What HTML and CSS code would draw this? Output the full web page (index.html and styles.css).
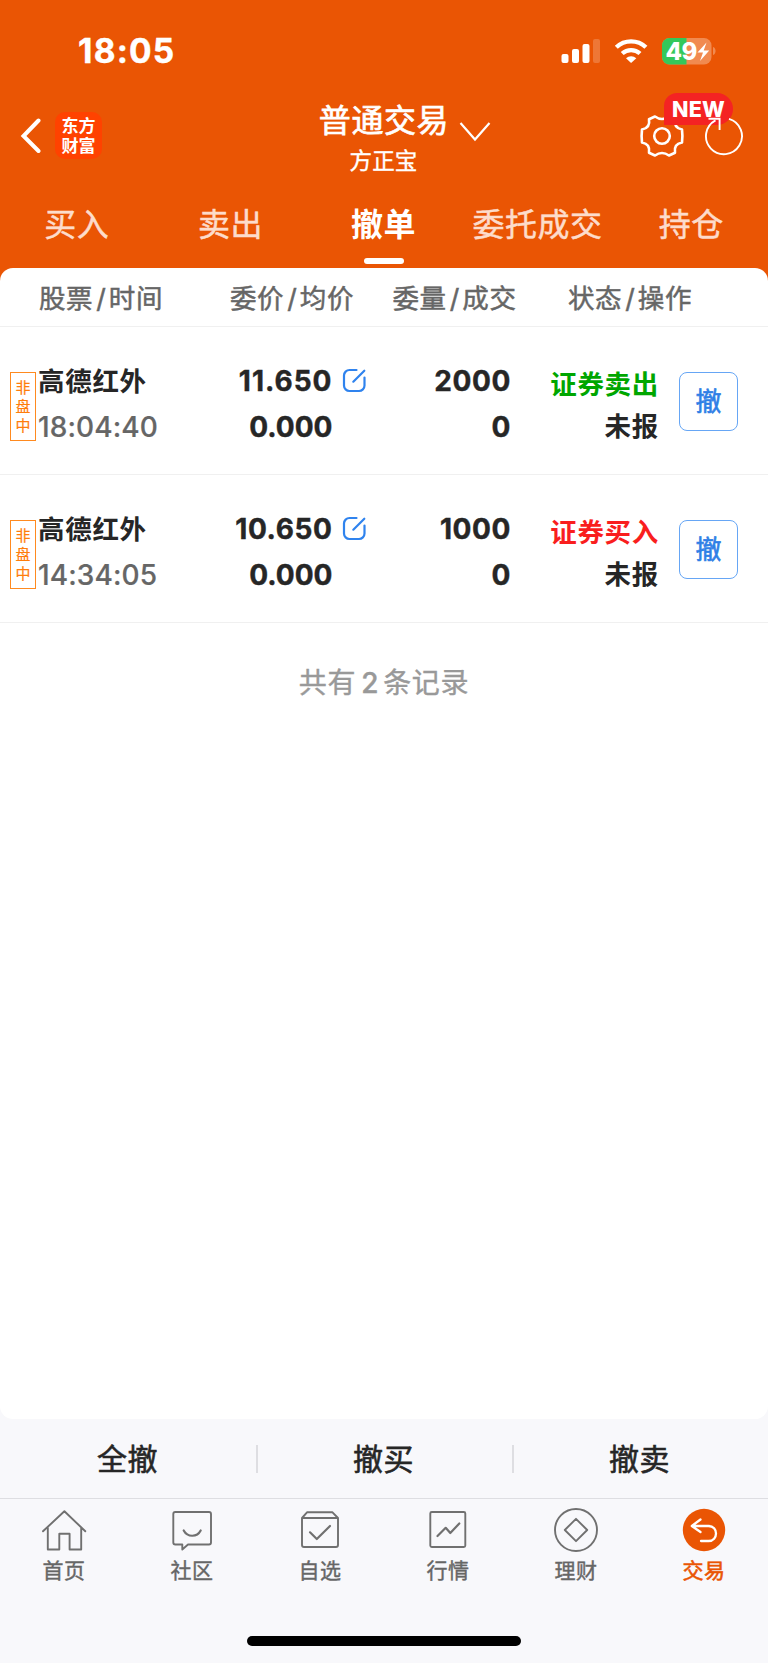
FILE: index.html
```html
<!DOCTYPE html>
<html lang="zh-CN">
<head>
<meta charset="utf-8">
<title>普通交易 - 撤单</title>
<link rel="stylesheet" href="styles.css">
</head>
<body>
<div class="app">
  <header class="top">
    <div class="status">
      <span class="clock">18:05</span>
      <svg class="status-icons" width="156" height="30" viewBox="561 36 156 30">
        <g fill="#fff">
          <rect x="561.5" y="54" width="7" height="9" rx="2"/>
          <rect x="572" y="49" width="7" height="14" rx="2"/>
          <rect x="582.5" y="44" width="7" height="19" rx="2"/>
          <rect x="593" y="39" width="7" height="24" rx="2" opacity=".2"/>
          <path d="M626 58.300a7.500 7.500 0 0 1 10.300-.1L631.100 63z"/>
        </g>
        <g fill="none" stroke="#fff" stroke-width="4.300">
          <path d="M616.300 47.200a21.500 21.500 0 0 1 29.600 0"/>
          <path d="M622.200 53.500a13.300 13.300 0 0 1 17.800 0"/>
        </g>
        <rect x="662" y="38" width="49.500" height="26.500" rx="7.500" fill="#f18a50"/>
        <path d="M686.500 38h-17a7.500 7.500 0 0 0-7.500 7.500v11.500a7.500 7.500 0 0 0 7.500 7.500h17z" fill="#34c85a"/>
        <path d="M713 47c3.400.8 3.400 7.200 0 8z" fill="#f18a50"/>
        <text x="665.500" y="60" class="battery-text">49</text>
        <path d="M706.500 42.500l-9 10h5.500l-3 8.500 9.200-10.500h-5.500z" fill="#fff"/>
      </svg>
    </div>
    <div class="nav">
      <svg class="back" width="22" height="36" viewBox="0 0 22 36"><path d="M18.500 2.500L3.500 18l15 15" fill="none" stroke="#fff" stroke-width="4" stroke-linecap="round"/></svg>
      <div class="logo"><span>东方</span><span>财富</span></div>
      <div class="title">
        <div class="title-main">普通交易</div>
        <div class="title-sub">方正宝</div>
      </div>
      <svg class="chevron" width="32" height="22" viewBox="0 0 32 22"><path d="M1.500 2L16 18.500 30.500 2" fill="none" stroke="#fff" stroke-width="2.200"/></svg>
      <div class="tools">
        <svg class="gear" width="46" height="46" viewBox="-23 -23 46 46" fill="none" stroke="#fff" stroke-width="2.600" stroke-linejoin="round">
          <circle r="7.800"/>
          <path d="M-7-19.500Q0-14.500 7-19.500L13-16.700Q11.500-8 20-6.500Q20.800 0 20 6.500Q11.500 8 13 16.700L7 19.500Q0 14.500-7 19.500L-13 16.700Q-11.500 8-20 6.500Q-20.800 0-20-6.500Q-11.500-8-13-16.700Z"/>
        </svg>
        <span class="badge">NEW</span>
        <svg class="refresh" width="42" height="46" viewBox="703 113 42 46" fill="none" stroke="#fff" stroke-width="1.900">
          <path d="M729 118.900A18 18 0 1 1 715.500 120.300"/><path d="M708.500 118.700H719.600V130"/>
        </svg>
      </div>
    </div>
    <nav class="tabs">
      <span>买入</span><span>卖出</span><span class="on">撤单</span><span>委托成交</span><span>持仓</span>
    </nav>
  </header>

  <div class="backdrop">
  <main class="panel">
    <div class="cols"><span>股票<i>/</i>时间</span><span>委价<i>/</i>均价</span><span>委量<i>/</i>成交</span><span>状态<i>/</i>操作</span></div>
    <section class="row">
      <div class="tag"><span>非</span><span>盘</span><span>中</span></div>
      <div class="stock"><b>高德红外</b><span class="time">18:04:40</span></div>
      <div class="num"><span class="wide">11.650</span><span class="tight">0.000</span></div>
      <svg class="edit" width="26" height="26" viewBox="0 0 26 26"><path d="M14.500 2H7.500A5.500 5.500 0 0 0 2 7.500v10A5.500 5.500 0 0 0 7.500 23h9.500A5.500 5.500 0 0 0 22.500 17.500V9.500M11.300 13.700L22.300 2.700" fill="none" stroke="#2f83ee" stroke-width="2.200" stroke-linecap="round"/></svg>
      <div class="num"><span>2000</span><span>0</span></div>
      <div class="state"><span class="sell">证券卖出</span><span>未报</span></div>
      <button class="cancel">撤</button>
    </section>
    <section class="row">
      <div class="tag"><span>非</span><span>盘</span><span>中</span></div>
      <div class="stock"><b>高德红外</b><span class="time">14:34:05</span></div>
      <div class="num"><span>10.650</span><span class="tight">0.000</span></div>
      <svg class="edit" width="26" height="26" viewBox="0 0 26 26"><path d="M14.500 2H7.500A5.500 5.500 0 0 0 2 7.500v10A5.500 5.500 0 0 0 7.500 23h9.500A5.500 5.500 0 0 0 22.500 17.500V9.500M11.300 13.700L22.300 2.700" fill="none" stroke="#2f83ee" stroke-width="2.200" stroke-linecap="round"/></svg>
      <div class="num"><span>1000</span><span>0</span></div>
      <div class="state"><span class="buy">证券买入</span><span>未报</span></div>
      <button class="cancel">撤</button>
    </section>
    <p class="total">共有<i>2</i>条记录</p>
  </main>
  </div>

  <div class="actions"><span>全撤</span><span>撤买</span><span>撤卖</span></div>
  <footer class="bottom">
    <div class="item">
      <svg width="48" height="48" viewBox="40 1506 48 48"><path d="M43 1531.300L64.400 1511.200 85.300 1531.300M47.800 1528V1549.500H59.300V1533.800H69.600V1549.500H81.200V1528"/></svg>
      <span>首页</span>
    </div>
    <div class="item">
      <svg width="48" height="48" viewBox="168 1506 48 48"><path d="M175.300 1512H209a2 2 0 0 1 2 2V1542.500a2 2 0 0 1-2 2H188L182.300 1549.500V1544.500H175.300a2 2 0 0 1-2-2V1514a2 2 0 0 1 2-2z"/><path class="bold" d="M183.700 1530.500C187.500 1537.500 197 1537.500 200.700 1530.500"/></svg>
      <span>社区</span>
    </div>
    <div class="item">
      <svg width="48" height="48" viewBox="296 1506 48 48"><path d="M302 1518L307 1512.300H332.500L338 1518V1545a2 2 0 0 1-2 2H304a2 2 0 0 1-2-2zM302 1518H338"/><path class="bold" d="M310 1532.300L316.800 1539 330 1526"/></svg>
      <span>自选</span>
    </div>
    <div class="item">
      <svg width="48" height="48" viewBox="424 1506 48 48"><rect x="430.300" y="1512" width="35" height="35" rx="1.500"/><path class="bold" d="M437.500 1536L445.700 1527.800 450.300 1533 459.300 1523.500"/></svg>
      <span>行情</span>
    </div>
    <div class="item">
      <svg width="48" height="48" viewBox="552 1506 48 48"><circle cx="576" cy="1530" r="21"/><path d="M576 1518.800L587.200 1530 576 1541.200 564.800 1530z"/></svg>
      <span>理财</span>
    </div>
    <div class="item on">
      <svg width="48" height="48" viewBox="680 1506 48 48"><circle class="disc" cx="704" cy="1530" r="21.200"/><path class="arrow" d="M700.500 1519.500L691.800 1526 700.500 1532M692.500 1526H708.500C718.500 1526 718.500 1541 708.500 1541H701"/></svg>
      <span>交易</span>
    </div>
  </footer>
  <div class="home"></div>
</div>
</body>
</html>
```

FILE: styles.css
```css
* { box-sizing: border-box; }
body { margin: 0; }
i { font-style: normal; }
.app {
  width: 768px; height: 1663px; overflow: hidden;
  display: flex; flex-direction: column;
  background: #f8f8fb;
  font-family: Inter, "Noto Sans CJK SC", sans-serif;
  color: #262626;
}

.top { height: 268px; background: #ea5504; color: #fff; }
.status { height: 96px; display: flex; justify-content: space-between; padding: 36px 51px 0 78px; }
.clock { font-size: 33.500px; line-height: 31px; font-weight: 700; letter-spacing: 1.200px; -webkit-text-stroke: .4px currentColor; }
.battery-text { font: 800 24px Inter, sans-serif; fill: #fff; letter-spacing: -.5px; }

.nav { height: 88px; display: flex; position: relative; }
.back { margin: 22px 0 0 20px; }
.logo {
  width: 47px; height: 47px; margin: 16px 0 0 13px; padding-top: 4px;
  border-radius: 10px; background: #ff4200;
  display: flex; flex-direction: column; align-items: center;
  font: 700 17px/20px Inter, "Noto Sans CJK SC", sans-serif;
}
.title { width: 140px; margin-left: 212px; text-align: center; }
.title-main { margin-top: 5px; font-size: 32px; line-height: 40px; letter-spacing: .6px; white-space: nowrap; -webkit-text-stroke: .7px currentColor; }
.title-sub { margin-top: 8px; font-size: 22.500px; line-height: 24px; letter-spacing: .2px; text-indent: -1px; -webkit-text-stroke: .4px currentColor; }
.chevron { margin: 25px 0 0 5px; }
.tools { position: relative; margin-left: 148px; display: flex; }
.gear { margin-top: 17px; }
.refresh { position: relative; margin: 17px 0 0 18px; }
.badge {
  position: absolute; left: 25px; top: -3px; width: 69px; height: 32px;
  border-radius: 13px 16px 16px 0; background: #f42323;
  font-size: 21.500px; line-height: 32px; font-weight: 800; letter-spacing: .3px; text-align: center;
}
.tabs { display: flex; }
.tabs span {
  flex: 1; height: 80px; display: flex; flex-direction: column; align-items: center;
  font-size: 32px; line-height: 82px; letter-spacing: .5px; white-space: nowrap;
  color: #fddccb; -webkit-text-stroke: .5px currentColor;
}
.tabs .on { color: #fff; font-weight: 700; text-indent: -1px; -webkit-text-stroke: 0; }
.tabs .on::after { content: ""; width: 40px; height: 6px; margin-top: -8px; border-radius: 3px; background: #fff; }

.backdrop { height: 1151px; background: linear-gradient(#ea5504 50%, #f8f8fb 50%); }
.panel { height: 1151px; border-radius: 13px; background: #fff; overflow: hidden; }
.cols {
  height: 59px; border-bottom: 1px solid #f0f0f0;
  display: grid; grid-template-columns: 202px 180px 145px 206px;
  font-size: 26.500px; line-height: 61px; text-align: center; color: #666; letter-spacing: .6px;
  -webkit-text-stroke: .5px currentColor;
}
.cols i { margin: 0 2.500px 0 3px; }
.row {
  height: 148px; border-bottom: 1px solid #f0f0f0; padding-left: 10px;
  display: grid; grid-template-columns: 28px 150px 144.500px 45.500px 133px 148px 109px; align-items: start;
}
.tag {
  width: 26px; height: 69px; margin-top: 45px; padding-top: 5px;
  border: 1px solid #ff8a1f; color: #ff7d0a;
  display: flex; flex-direction: column; align-items: center;
  font-size: 15px; line-height: 19px; -webkit-text-stroke: .2px currentColor;
}
.stock, .num, .state { display: flex; flex-direction: column; padding-top: 32px; line-height: 45px; white-space: nowrap; }
.stock b { font-size: 26.500px; letter-spacing: .7px; }
.time { margin-top: .5px; font-size: 28px; font-weight: 500; color: #666; letter-spacing: .1px; -webkit-text-stroke: .2px currentColor; }
.num { align-items: flex-end; font-size: 28px; font-weight: 700; letter-spacing: .6px; -webkit-text-stroke: .4px currentColor; }
.num span + span { margin-top: .5px; }
.num .wide { letter-spacing: 1px; }
.num .tight { letter-spacing: 0; }
.edit { margin: 41px 0 0 9px; }
.state { align-items: flex-end; padding-top: 36px; line-height: 42px; font-size: 26.500px; font-weight: 700; letter-spacing: .7px; }
.sell { color: #00a600; }
.buy { color: #f91e1e; }
.cancel {
  width: 59px; height: 59px; margin: 45px 0 0 20px; padding: 0;
  border: 1.500px solid #66a6f5; border-radius: 8px; background: none;
  font: 400 26px/58px Inter, "Noto Sans CJK SC", sans-serif; color: #2f7fe6;
  -webkit-text-stroke: .6px currentColor;
}
.total { margin: 40px 0 0; font-size: 28px; line-height: 40px; letter-spacing: .7px; text-align: center; color: #999; -webkit-text-stroke: .4px currentColor; }
.total i { margin: 0 4px 0 5px; font-weight: 500; }

.actions { height: 80px; display: grid; grid-template-columns: repeat(3, 1fr); align-items: center; border-bottom: 1px solid #dedee2; }
.actions span { height: 28px; line-height: 29px; font-size: 30px; letter-spacing: .4px; text-align: center; text-indent: -1px; -webkit-text-stroke: .6px currentColor; }
.actions span + span { border-left: 2px solid #dedee2; text-indent: -3px; }
.bottom { height: 137px; display: grid; grid-template-columns: repeat(6, 1fr); padding-top: 7px; }
.item { display: flex; flex-direction: column; align-items: center; font-size: 21px; line-height: 34px; letter-spacing: .5px; color: #666; -webkit-text-stroke: .4px currentColor; }
.item svg { fill: none; stroke: #707070; stroke-width: 1.900; stroke-linecap: round; stroke-linejoin: round; }
.item .bold { stroke-width: 2.200; }
.item.on { color: #ea5504; -webkit-text-stroke-width: .6px; }
.item .disc { fill: #ea5504; stroke: none; }
.item .arrow { stroke: #fff; stroke-width: 2.300; }
.home { width: 274px; height: 10px; margin: 0 auto; border-radius: 5px; background: #000; }
```
